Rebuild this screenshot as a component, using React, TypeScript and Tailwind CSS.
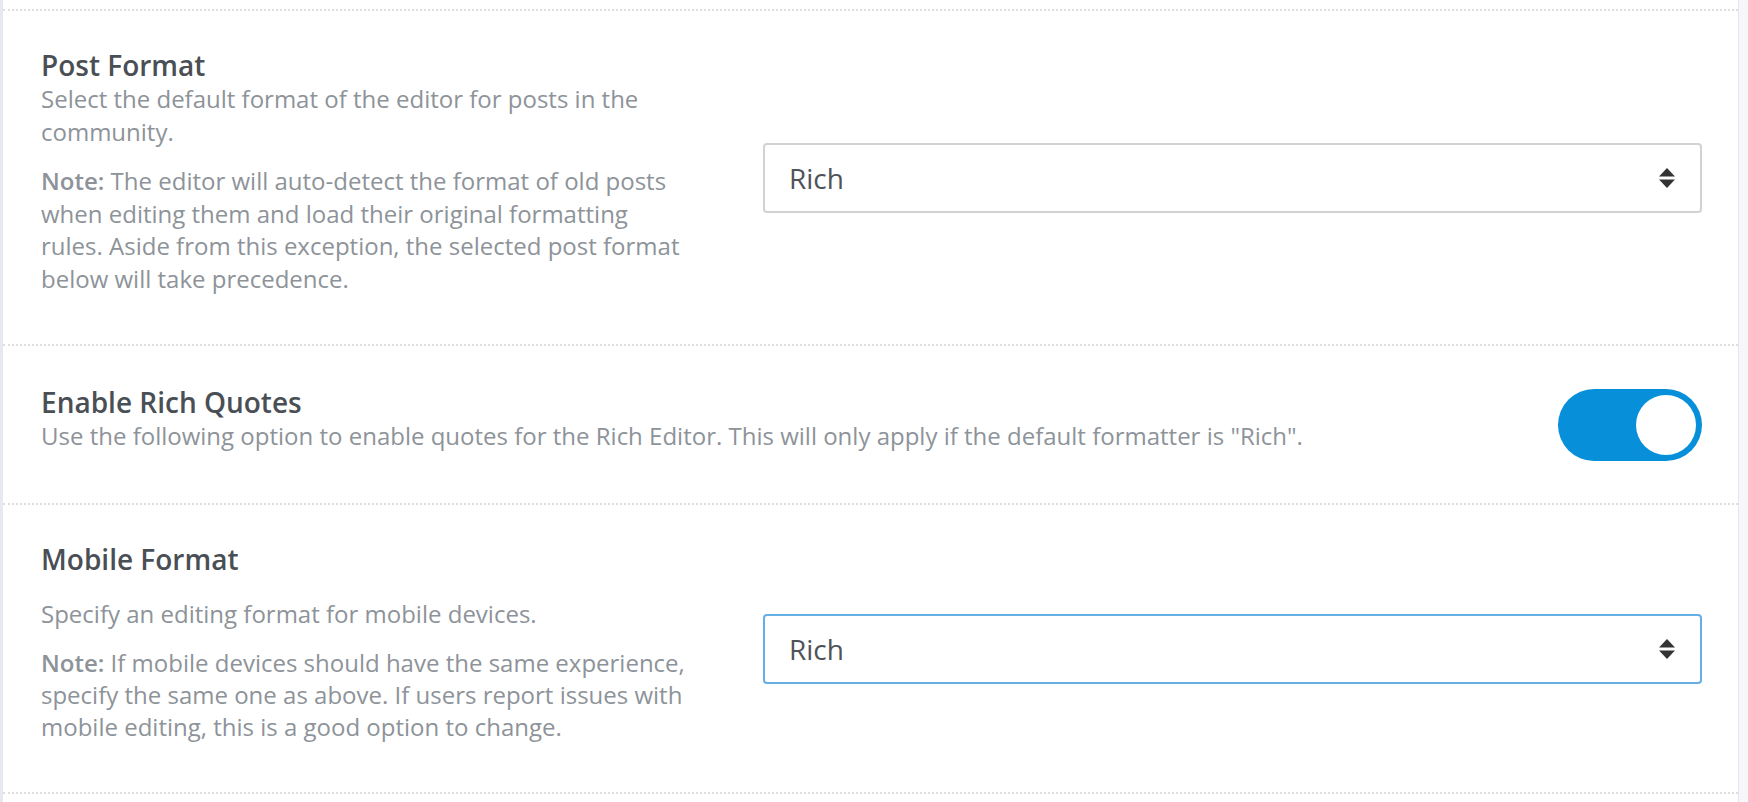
import React from "react";

const font = { fontFamily: '"Open Sans", "Noto Sans", sans-serif' };

function SelectBox({ value, focused }: { value: string; focused?: boolean }) {
  return (
    <div
      className={
        "w-[939px] h-[70px] rounded-[4px] bg-white flex items-center justify-between pl-[24px] pr-[25px] " +
        (focused ? "border-2 border-[#66aee6]" : "border-2 border-[#d2d2d2]")
      }
    >
      <span className="text-[28px] text-[#4f5358]">{value}</span>
      <svg width="16" height="20" viewBox="0 0 16 20" aria-hidden="true">
        <path d="M8 0 L16 8.5 L0 8.5 Z" fill="#333333" />
        <path d="M0 11.5 L16 11.5 L8 20 Z" fill="#333333" />
      </svg>
    </div>
  );
}

function Toggle({ on }: { on: boolean }) {
  return (
    <button
      type="button"
      aria-pressed={on}
      className="w-[144px] h-[72px] rounded-full bg-[#078fd9] p-[6px] flex justify-end"
    >
      <span className="block w-[60px] h-[60px] rounded-full bg-white" />
    </button>
  );
}

export default function App() {
  return (
    <div className="w-[1748px] h-[802px] bg-[#f5f7fa] flex" style={font}>
      <div className="w-[1739px] h-full bg-white border-l-[3px] border-r border-l-[#e6eaee] border-r-[#e3e7eb] pt-[9px]">
        {/* Post format */}
        <div className="h-[337px] border-y-2 border-dotted border-[#dedede] flex items-center justify-between pl-[38px] pr-[36px]">
          <div className="w-[646px] self-start pt-[36px]">
            <div className="text-[28px] leading-[36px] font-semibold text-[#4a4f55]">Post Format</div>
            <p className="text-[24px] leading-[32.5px] text-[#8d9399]">
              Select the default format of the editor for posts in the community.
            </p>
            <p className="mt-[17px] text-[24px] leading-[32.5px] text-[#8d9399]">
              <strong className="font-semibold">Note:</strong> The editor will auto-detect the format of old posts when
              editing them and load their original formatting rules. Aside from this exception, the selected post format
              below will take precedence.
            </p>
          </div>
          <SelectBox value="Rich" />
        </div>

        {/* Rich quotes */}
        <div className="h-[159px] border-b-2 border-dotted border-[#dedede] flex items-center justify-between pl-[38px] pr-[36px]">
          <div className="self-start pt-[39px]">
            <div className="text-[28px] leading-[35px] font-semibold text-[#4a4f55]">Enable Rich Quotes</div>
            <p className="text-[24px] leading-[32.5px] text-[#8d9399]">
              Use the following option to enable quotes for the Rich Editor. This will only apply if the default
              formatter is "Rich".
            </p>
          </div>
          <Toggle on />
        </div>

        {/* Mobile format */}
        <div className="h-[289px] border-b-2 border-dotted border-[#dedede] flex items-center justify-between pl-[38px] pr-[36px]">
          <div className="w-[646px] self-start pt-[36px]">
            <div className="text-[28px] leading-[36px] font-semibold text-[#4a4f55]">Mobile Format</div>
            <p className="mt-[21px] text-[24px] leading-[32.5px] text-[#8d9399]">
              Specify an editing format for mobile devices.
            </p>
            <p className="mt-[16px] text-[24px] leading-[32px] text-[#8d9399]">
              <strong className="font-semibold">Note:</strong> If mobile devices should have the same experience,
              specify the same one as above. If users report issues with mobile editing, this is a good option to
              change.
            </p>
          </div>
          <SelectBox value="Rich" focused />
        </div>
      </div>
    </div>
  );
}
